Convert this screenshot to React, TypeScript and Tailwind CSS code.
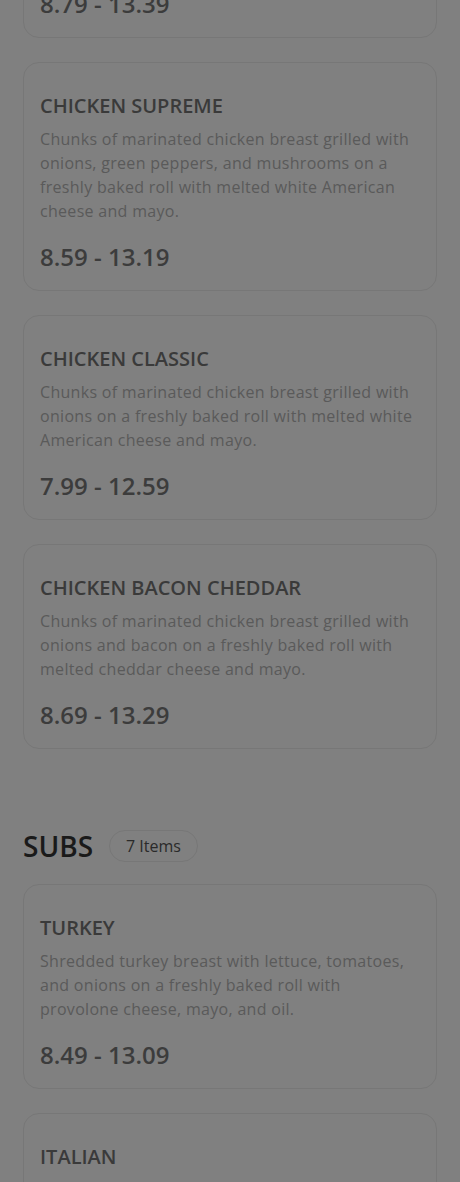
type Item = { name: string; desc: string; price: string };

const chicken: Item[] = [
  {
    name: 'CHICKEN PHILLY',
    desc: 'Chunks of marinated chicken breast grilled with onions and green peppers on a freshly baked roll with melted provolone.',
    price: '8.79 - 13.39',
  },
  {
    name: 'CHICKEN SUPREME',
    desc: 'Chunks of marinated chicken breast grilled with onions, green peppers, and mushrooms on a freshly baked roll with melted white American cheese and mayo.',
    price: '8.59 - 13.19',
  },
  {
    name: 'CHICKEN CLASSIC',
    desc: 'Chunks of marinated chicken breast grilled with onions on a freshly baked roll with melted white American cheese and mayo.',
    price: '7.99 - 12.59',
  },
  {
    name: 'CHICKEN BACON CHEDDAR',
    desc: 'Chunks of marinated chicken breast grilled with onions and bacon on a freshly baked roll with melted cheddar cheese and mayo.',
    price: '8.69 - 13.29',
  },
];

const subs: Item[] = [
  {
    name: 'TURKEY',
    desc: 'Shredded turkey breast with lettuce, tomatoes, and onions on a freshly baked roll with provolone cheese, mayo, and oil.',
    price: '8.49 - 13.09',
  },
  {
    name: 'ITALIAN',
    desc: 'Ham, salami and capicola with lettuce, tomatoes, and onions on a freshly baked roll with provolone cheese and oil.',
    price: '8.79 - 13.39',
  },
];

function MenuCard({ item }: { item: Item }) {
  return (
    <div className="rounded-2xl border border-[#777777] px-4 pt-[29px] pb-[17px]">
      <h3 className="text-[20px] leading-7 font-semibold text-[#3a3a3a]">{item.name}</h3>
      <p className="mt-[7px] text-[16px] leading-6 tracking-[0.3px] text-[#5a5a5a]">{item.desc}</p>
      <p className="mt-[18px] text-[24px] leading-8 font-semibold text-[#3c3c3c]">{item.price}</p>
    </div>
  );
}

export default function App() {
  return (
    <div
      className="min-h-[1182px] overflow-hidden bg-[#808080]"
      style={{ fontFamily: '"Open Sans", "Noto Sans", sans-serif' }}
    >
      <div className="-mt-[167px] px-[23px]">
        <div className="space-y-6">
          {chicken.map((item) => (
            <MenuCard key={item.name} item={item} />
          ))}
        </div>

        <section className="pt-[79px]">
          <div className="mb-5 flex items-center gap-4">
            <h2 className="text-[28px] leading-9 font-semibold text-[#1a1a1a]">SUBS</h2>
            <span className="rounded-full border border-[#777777] px-4 py-[3px] text-[16px] leading-6 text-[#2a2a2a]">
              7 Items
            </span>
          </div>
          <div className="space-y-6">
            {subs.map((item) => (
              <MenuCard key={item.name} item={item} />
            ))}
          </div>
        </section>
      </div>
    </div>
  );
}
